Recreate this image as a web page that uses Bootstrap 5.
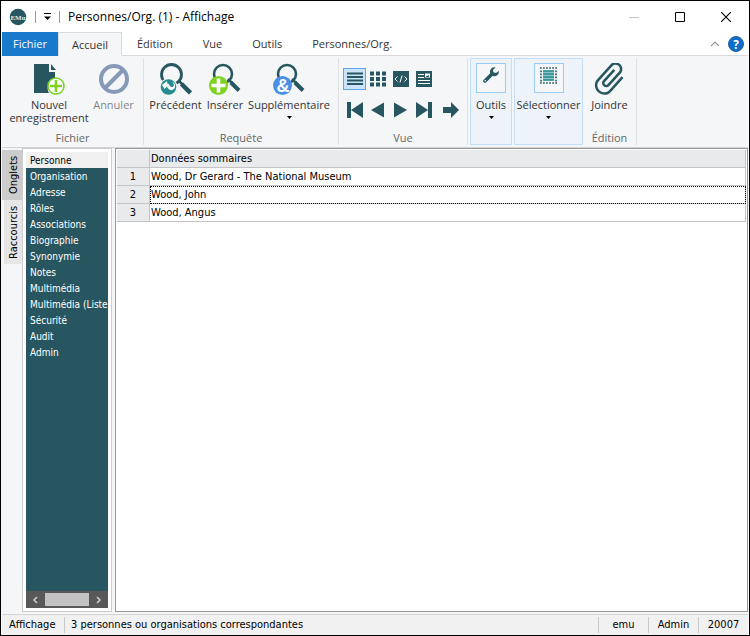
<!DOCTYPE html>
<html lang="fr">
<head>
<meta charset="utf-8">
<meta name="viewport" content="width=device-width, initial-scale=1">
<title>Personnes/Org. (1) - Affichage</title>
<link href="https://cdn.jsdelivr.net/npm/bootstrap@5.3.0/dist/css/bootstrap.min.css" rel="stylesheet">
<style>
:root { --teal: #285660; --ribbon: #f4f6f8; --line: #d8dade; }
body { font-family: "Open Sans", sans-serif; font-size: 11px; line-height: 13px; color: #333; }
button { font: inherit; color: inherit; background: none; border: 0; padding: 0; }
svg { display: block; flex: none; }
.app-window { border: 1px solid #000; background: #fff; }
.title-bar { height: 31px; padding-left: 8px; color: #000; font-size: 12px; line-height: 16px; }
.title-rule { width: 1px; height: 12px; background: #999; }
.title-menu { padding: 0 8px; }
.win-btn { width: 46px; height: 30px; }
.tab-strip { height: 24px; margin: 0 1px; }
.tab-strip .menu-tab { padding: 0 15px; height: 24px; border-bottom: 1px solid var(--line); }
.tab-strip .file-tab { width: 56px; background: #1979ca; color: #fff; border-color: #1979ca; padding: 0; }
.tab-strip .tab-open { width: 64px; padding: 0; background: var(--ribbon); border: 1px solid var(--line); border-bottom-color: var(--ribbon); }
.tab-fill { border-bottom: 1px solid var(--line); }
.ribbon { background: var(--ribbon); margin: 0 1px; height: 92px; padding-top: 2px; border-bottom: 1px solid #d0d2d5; }
.tool-group { height: 87px; border-right: 1px solid #dfe1e4; }
.group-name { height: 14px; color: #666; }
.tool { padding-top: 5px; }
.tool-name { margin-top: 3px; }
.w-new { width: 94px; } .w-undo { width: 47px; padding-right: 12px; }
.w-prev { width: 63px; } .w-ins { width: 36px; } .w-sup { width: 95px; padding-right: 3px; }
.w-view { width: 129px; } .w-join { width: 54px; }
.drop-box { border: 1px solid #c3dff7; background: #edf3f8; height: 87px; padding-top: 4px; margin-left: 2px; }
.drop-box .tool-name { margin-top: 5px; }
.drop-tools { width: 42px; } .drop-select { width: 69px; }
.icon-box { width: 30px; height: 30px; border: 1px solid #99ccf8; background: #f4f6f8; padding-top: 3px; }
.caret-mark { margin-top: 5px; }
.view-rows { padding: 10px 4px 0; }
.view-btn { width: 23px; height: 22px; }
.view-on { background: #cce4fb; border: 1px solid #5ea7e8; }
.work-area { background: var(--ribbon); padding: 0 1px 2px; font: 11px/16px "DejaVu Sans Condensed", "DejaVu Sans", sans-serif; color: #000; }
.side-tabs { width: 20px; padding-top: 2px; }
.side-tab { writing-mode: vertical-rl; transform: rotate(180deg); width: 18px; padding-right: 2px; background: #e6e6e6; line-height: 16px; height: 64px; }
.side-tab.side-on { width: 20px; height: 50px; padding-right: 4px; background: #ccc; }
.side-panel { width: 90px; border: 1px solid #ccc; padding: 3px; background: #fff; margin-right: 3px; }
.page-list { background: var(--teal); font-size: 10px; }
.page-list a { display: block; height: 16px; padding: 1px 0 0 4px; line-height: 15px; color: #fff; text-decoration: none; white-space: nowrap; overflow: hidden; }
.page-list a.page-on { background: #f0f0f0; color: #000; }
.h-scroll { height: 17px; background: #585858; padding: 0 6px; }
.h-thumb { width: 44px; height: 13px; background: #c2c2c2; }
.grid-pane { border: 1px solid #999; background: #fff; padding: 1px; }
.grid-pane .table { --bs-table-bg: transparent; color: #000; border-color: #c4c4c4; border-collapse: separate; border-spacing: 0; table-layout: fixed; }
.grid-pane .table > :not(caption) > * { border: 0; }
.grid-pane .table > :not(caption) > * > * { height: 18px; padding: 0 1px; border: solid #c4c4c4; border-width: 0 1px 1px 0; line-height: 17px; font-weight: 400; box-shadow: none; }
.grid-pane .table .num-col { width: 33px; text-align: center; background: #e9eaec; }
.grid-pane .table thead th { background: #e9eaec; }
.cell-focus { outline: 1px dotted #000; outline-offset: -1px; }
.status-bar { height: 21px; margin: 0 1px; background: #f1f1f1; border-top: 1px solid #d5d5d5; font: 11px/18px "DejaVu Sans Condensed", "DejaVu Sans", sans-serif; color: #000; }
.status-mode { width: 62px; padding-left: 7px; }
.status-cell { height: 16px; line-height: 16px; border-left: 1px solid #c8c8c8; text-align: center; }
.status-info { width: 50px; }
.status-note { padding-left: 6px; }
</style>
</head>
<body>
<div class="app-window vh-100 d-flex flex-column overflow-hidden">
  <header class="title-bar d-flex align-items-center">
    <svg width="18" height="18" viewBox="0 0 18 18"><circle cx="9" cy="9" r="8.300" fill="#285660"/><text x="9" y="11.500" font-family="Liberation Serif, serif" font-size="7" font-weight="700" fill="#dfe9ea" text-anchor="middle">EMu</text></svg>
    <span class="title-rule ms-2 me-0"></span>
    <button type="button" aria-label="Personnaliser" class="title-menu"><svg width="7" height="7" viewBox="0 0 7 7"><path d="M0 .5h7" stroke="#000"/><path d="M0 3.500h7L3.500 7z"/></svg></button>
    <span class="title-rule"></span>
    <span class="flex-fill ps-2">Personnes/Org. (1) - Affichage</span>
    <button type="button" aria-label="Réduire" class="win-btn d-flex align-items-center justify-content-center"><svg width="10" height="10"><path d="M0 5.500h10" stroke="#c4c4c4"/></svg></button>
    <button type="button" aria-label="Agrandir" class="win-btn d-flex align-items-center justify-content-center"><svg width="10" height="10"><path d="M.5.5h9v9h-9z" fill="none" stroke="#000"/></svg></button>
    <button type="button" aria-label="Fermer" class="win-btn d-flex align-items-center justify-content-center"><svg width="10" height="10"><path d="M0 0l10 10M10 0L0 10" stroke="#000" stroke-width="1.100"/></svg></button>
  </header>

  <nav class="tab-strip d-flex">
    <button type="button" class="menu-tab file-tab">Fichier</button>
    <button type="button" class="menu-tab tab-open">Accueil</button>
    <button type="button" class="menu-tab">Édition</button>
    <button type="button" class="menu-tab">Vue</button>
    <button type="button" class="menu-tab">Outils</button>
    <button type="button" class="menu-tab">Personnes/Org.</button>
    <div class="tab-fill flex-fill d-flex justify-content-end align-items-center gap-2 pe-1">
      <button type="button" aria-label="Réduire le ruban"><svg width="10" height="6"><path d="M1 5l4-4 4 4" fill="none" stroke="#999" stroke-width="1.200"/></svg></button>
      <button type="button" aria-label="Aide"><svg width="16" height="16"><circle cx="8" cy="8" r="7.500" fill="#0a6ccb" stroke="#2b5f92"/><text x="8" y="12.500" font-family="Open Sans, sans-serif" font-size="12" font-weight="700" fill="#fff" text-anchor="middle">?</text></svg></button>
    </div>
  </nav>

  <section class="ribbon d-flex">
    <div class="tool-group d-flex flex-column">
      <div class="d-flex flex-fill">
        <button type="button" class="tool w-new d-flex flex-column align-items-center">
          <svg width="32" height="32" viewBox="0 0 32 32"><path d="M1 1h15v8h6v8a8.500 8.500 0 0 0-6 13H1zM18 1l5 6h-5z" fill="#285660"/><circle cx="23" cy="23" r="8" fill="#fff" stroke="#7bce2c" stroke-width="1.500"/><path d="M23 17v12M17 23h12" stroke="#7ed321" stroke-width="2.600"/></svg>
          <span class="tool-name">Nouvel<br>enregistrement</span>
        </button>
        <button type="button" class="tool w-undo d-flex flex-column align-items-center" disabled>
          <svg width="32" height="32" viewBox="0 0 32 32"><circle cx="16" cy="16" r="13" fill="none" stroke="#8799b8" stroke-width="4"/><path d="M7 25L25 7" stroke="#8799b8" stroke-width="4"/></svg>
          <span class="tool-name text-black-50">Annuler</span>
        </button>
      </div>
      <div class="group-name text-center">Fichier</div>
    </div>

    <div class="tool-group d-flex flex-column">
      <div class="d-flex flex-fill">
        <button type="button" class="tool w-prev d-flex flex-column align-items-center">
          <svg width="32" height="32" viewBox="0 0 32 32"><circle cx="11.500" cy="11.500" r="10" fill="none" stroke="#285660" stroke-width="2.800"/><path d="M19 18l4 4" stroke="#285660" stroke-width="2.500"/><path d="M21.500 21l9 9" stroke="#285660" stroke-width="4.500"/><circle cx="8.500" cy="24" r="9" fill="#f4f6f8"/><circle cx="8.500" cy="24" r="7.800" fill="#258b91"/><path d="M2 22l5-4 .3 2.500c2 0 2.700 4 5.200 3.500 2-.5 1.500-4-.5-5.500 3.500 1.500 4 5.500 2 7.500-3 2.500-6 .5-7-2.500L4.500 26z" fill="#fff"/></svg>
          <span class="tool-name">Précédent</span>
        </button>
        <button type="button" class="tool w-ins d-flex flex-column align-items-center">
          <svg width="32" height="32" viewBox="0 0 32 32"><circle cx="14" cy="11" r="9" fill="none" stroke="#285660" stroke-width="2.600"/><path d="M19 16l4 4" stroke="#285660" stroke-width="2.500"/><path d="M22 19.500l8 8" stroke="#285660" stroke-width="4"/><circle cx="9.500" cy="22.500" r="9.500" fill="#7ed321"/><path d="M9.500 15.500v14M2.500 22.500h14" stroke="#fff" stroke-width="3.600"/></svg>
          <span class="tool-name">Insérer</span>
        </button>
        <button type="button" class="tool w-sup d-flex flex-column align-items-center">
          <svg width="32" height="32" viewBox="0 0 32 32"><circle cx="14" cy="11" r="9" fill="none" stroke="#285660" stroke-width="2.600"/><path d="M19 16l4 4" stroke="#285660" stroke-width="2.500"/><path d="M22 19.500l8 8" stroke="#285660" stroke-width="4"/><circle cx="9.500" cy="22.500" r="9.500" fill="#4a90e2"/><text x="10" y="29" font-family="Liberation Sans, sans-serif" font-size="18" font-weight="700" fill="#fff" text-anchor="middle">&amp;</text></svg>
          <span class="tool-name">Supplémentaire</span>
          <svg class="caret-mark" width="5" height="3"><path d="M0 0h5L2.500 3z"/></svg>
        </button>
      </div>
      <div class="group-name text-center">Requête</div>
    </div>

    <div class="tool-group w-view d-flex flex-column">
      <div class="flex-fill view-rows">
        <div class="d-flex">
          <button type="button" aria-label="Liste" class="view-btn view-on d-flex align-items-center justify-content-center"><svg width="16" height="14"><path d="M0 1.500h16M0 5h16M0 8.500h16M0 12h16" stroke="#285660" stroke-width="2"/></svg></button>
          <button type="button" aria-label="Grille" class="view-btn d-flex align-items-center justify-content-center"><svg width="16" height="16"><path d="M0 2.500h16M0 8h16M0 13.500h16" stroke="#285660" stroke-width="4" stroke-dasharray="4 2"/></svg></button>
          <button type="button" aria-label="Code" class="view-btn d-flex align-items-center justify-content-center"><svg width="16" height="16"><path d="M0 0h16v16H0z" fill="#285660"/><path d="M4.500 5.500L2 8l2.500 2.500M11.500 5.500L14 8l-2.500 2.500M9 4.500l-2 7" fill="none" stroke="#fff"/></svg></button>
          <button type="button" aria-label="Page" class="view-btn d-flex align-items-center justify-content-center"><svg width="16" height="16"><path d="M0 0h16v16H0z" fill="#285660"/><path d="M2 3.500h6M2 6.500h6M2 9.500h12M2 12.500h12" stroke="#fff"/><path d="M9 2.500h5v4H9z" fill="#fff"/><path d="M10 5.500l1-1 1 .5 1-1.500v2.500h-3z" fill="#285660"/></svg></button>
        </div>
        <div class="d-flex mt-2 pt-1">
          <button type="button" aria-label="Premier" class="view-btn d-flex justify-content-center align-items-start"><svg width="16" height="16"><path d="M0 0h4v16H0zM16 0v16L4 8z" fill="#285660"/></svg></button>
          <button type="button" aria-label="Précédent" class="view-btn d-flex justify-content-center align-items-start"><svg width="13" height="16"><path d="M13 .5v15L0 8z" fill="#285660"/></svg></button>
          <button type="button" aria-label="Suivant" class="view-btn d-flex justify-content-center align-items-start"><svg width="13" height="16"><path d="M0 .5v15L13 8z" fill="#285660"/></svg></button>
          <button type="button" aria-label="Dernier" class="view-btn d-flex justify-content-center align-items-start"><svg width="16" height="16"><path d="M12 0h4v16h-4zM0 0v16l12-8z" fill="#285660"/></svg></button>
          <button type="button" aria-label="Aller à" class="view-btn d-flex justify-content-center align-items-start ms-1"><svg width="16" height="16"><path d="M0 5h8V0l8 8-8 8v-5H0z" fill="#285660"/></svg></button>
        </div>
      </div>
      <div class="group-name text-center">Vue</div>
    </div>

    <button type="button" class="drop-box drop-tools d-flex flex-column align-items-center">
      <span class="icon-box d-flex justify-content-center align-items-start"><svg width="16" height="16" viewBox="0 0 16 16"><path d="M2 14l6.500-6.500" stroke="#285660" stroke-width="3.600" stroke-linecap="round"/><path d="M12.500.3a4.500 4.500 0 0 0-5.300 5.800 4.500 4.500 0 0 0 3 3A4.500 4.500 0 0 0 15.800 4L13 6l-2.700-.7L10 3z" fill="#285660"/><circle cx="2.300" cy="13.700" r=".8" fill="#fff"/></svg></span>
      <span class="tool-name">Outils</span>
      <svg class="caret-mark" width="5" height="3"><path d="M0 0h5L2.500 3z"/></svg>
    </button>
    <button type="button" class="drop-box drop-select d-flex flex-column align-items-center">
      <span class="icon-box d-flex justify-content-center align-items-start"><svg width="17" height="17"><path d="M0 1h17M0 16h17M1 3.500v11M16 3.500v11" fill="none" stroke="#285660" stroke-width="1.600" stroke-dasharray="1.700 1.360"/><path d="M3 3.500h11v10H3z" fill="#8cc4c8"/><path d="M3 4h11M3 7h11M3 10h11M3 13h11" stroke="#258b91" stroke-width="1.600"/></svg></span>
      <span class="tool-name">Sélectionner</span>
      <svg class="caret-mark" width="5" height="3"><path d="M0 0h5L2.500 3z"/></svg>
    </button>

    <div class="tool-group w-join d-flex flex-column">
      <button type="button" class="tool flex-fill d-flex flex-column align-items-center">
        <svg width="32" height="32" viewBox="0 0 32 32"><path transform="translate(16 16) rotate(42) scale(1.700 1.620) translate(-12.500 -12)" d="M16.500 6v11.500c0 2.210-1.790 4-4 4s-4-1.790-4-4V5c0-1.380 1.120-2.500 2.500-2.500s2.500 1.120 2.500 2.500v10.500c0 .55-.45 1-1 1s-1-.45-1-1V6H10v9.500c0 1.380 1.120 2.500 2.500 2.500s2.500-1.120 2.500-2.500V5c0-2.210-1.790-4-4-4S7 2.790 7 5v12.500c0 3.040 2.460 5.500 5.500 5.500s5.500-2.460 5.500-5.500V6z" fill="#285660"/></svg>
        <span class="tool-name">Joindre</span>
      </button>
      <div class="group-name text-center">Édition</div>
    </div>
  </section>

  <main class="work-area d-flex flex-fill">
    <div class="side-tabs d-flex flex-column align-items-end">
      <button type="button" class="side-tab side-on">Onglets</button>
      <button type="button" class="side-tab">Raccourcis</button>
    </div>
    <aside class="side-panel d-flex flex-column">
      <nav class="page-list flex-fill">
        <a href="#" class="page-on">Personne</a>
        <a href="#">Organisation</a>
        <a href="#">Adresse</a>
        <a href="#">Rôles</a>
        <a href="#">Associations</a>
        <a href="#">Biographie</a>
        <a href="#">Synonymie</a>
        <a href="#">Notes</a>
        <a href="#">Multimédia</a>
        <a href="#">Multimédia (Liste)</a>
        <a href="#">Sécurité</a>
        <a href="#">Audit</a>
        <a href="#">Admin</a>
      </nav>
      <div class="h-scroll d-flex align-items-center justify-content-between">
        <svg width="6" height="8"><path d="M5 1L2 4l3 3" fill="none" stroke="#d0d0d0" stroke-width="1.500"/></svg>
        <span class="h-thumb"></span>
        <svg width="6" height="8"><path d="M1 1l3 3-3 3" fill="none" stroke="#d0d0d0" stroke-width="1.500"/></svg>
      </div>
    </aside>
    <div class="grid-pane flex-fill">
      <table class="table mb-0">
        <thead><tr><th class="num-col"></th><th>Données sommaires</th></tr></thead>
        <tbody>
          <tr><td class="num-col">1</td><td>Wood, Dr Gerard - The National Museum</td></tr>
          <tr><td class="num-col">2</td><td class="cell-focus">Wood, John</td></tr>
          <tr><td class="num-col">3</td><td>Wood, Angus</td></tr>
        </tbody>
      </table>
    </div>
  </main>

  <footer class="status-bar d-flex align-items-center">
    <span class="status-mode">Affichage</span>
    <span class="status-cell status-note flex-fill text-start">3 personnes ou organisations correspondantes</span>
    <span class="status-cell status-info">emu</span>
    <span class="status-cell status-info">Admin</span>
    <span class="status-cell status-info">20007</span>
  </footer>
</div>
<script src="https://cdn.jsdelivr.net/npm/bootstrap@5.3.0/dist/js/bootstrap.bundle.min.js"></script>
</body>
</html>
